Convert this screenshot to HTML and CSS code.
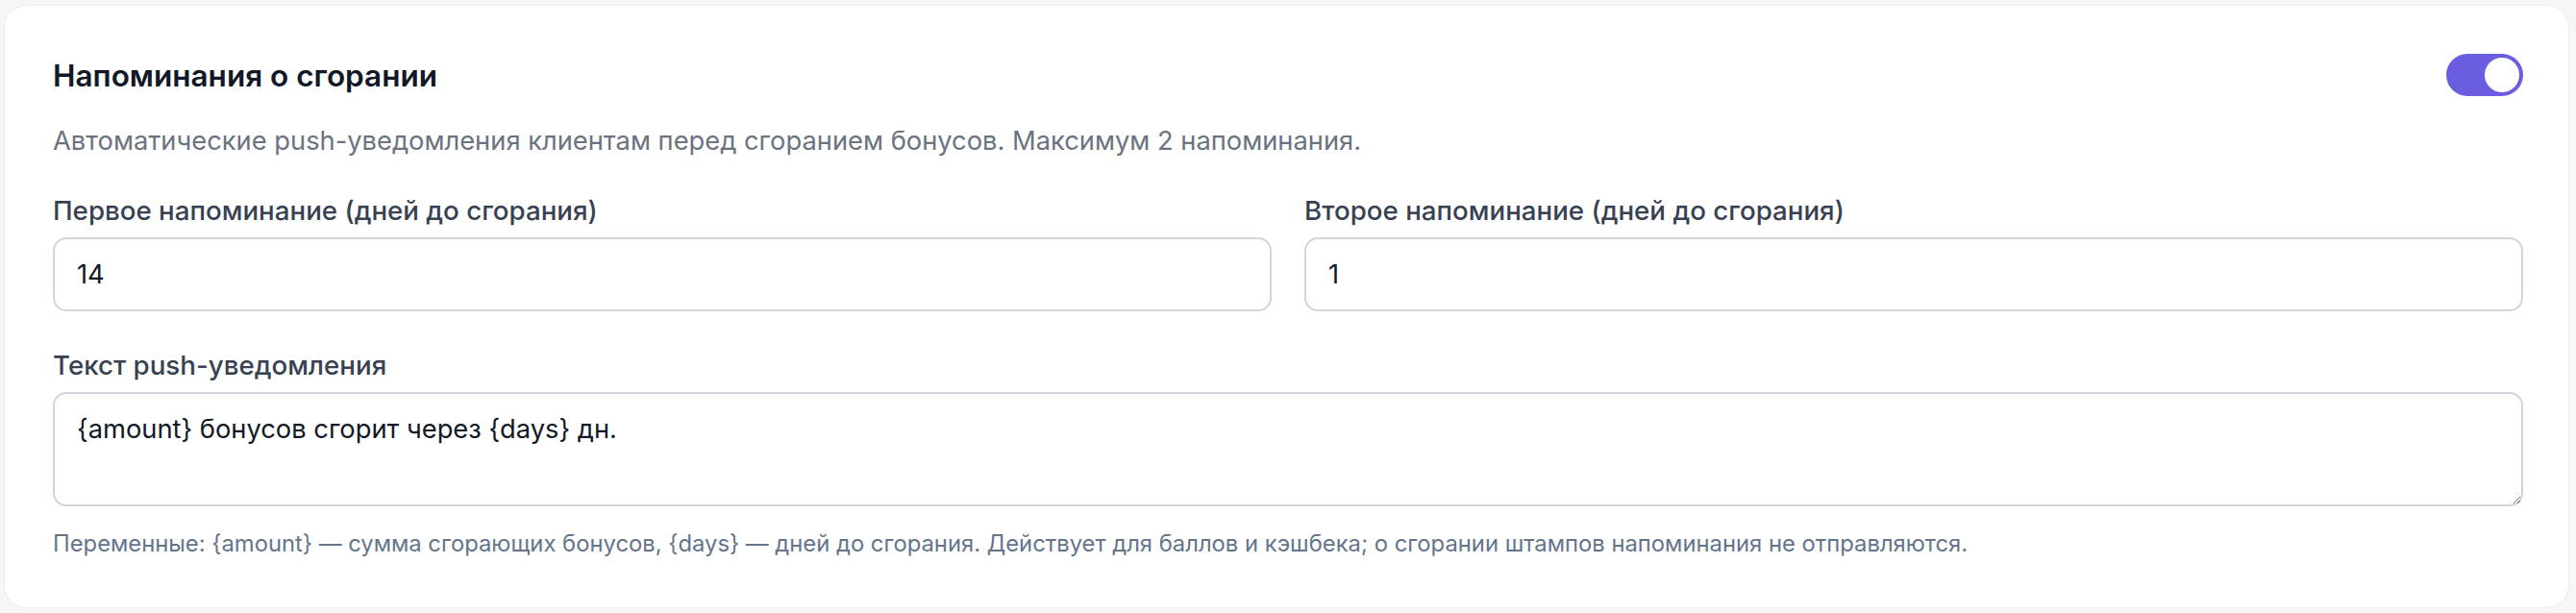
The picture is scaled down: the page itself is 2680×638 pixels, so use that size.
FILE: index.html
```html
<!DOCTYPE html>
<html lang="ru">
<head>
    <meta charset="UTF-8">
    <meta name="viewport" content="width=device-width, initial-scale=1.0">
    <title>Напоминания о сгорании</title>
    <link rel="stylesheet" href="styles.css">
</head>
<body>
    <div class="card">
        <div class="card_head">
            <h2 class="card_title">Напоминания о сгорании</h2>
            <label class="switch">
                <input type="checkbox" checked>
                <span class="switch_track"></span>
            </label>
        </div>
        <p class="card_desc">Автоматические push-уведомления клиентам перед сгоранием бонусов. Максимум 2 напоминания.</p>
        <div class="row">
            <div class="field">
                <label class="field_label" for="first">Первое напоминание (дней до сгорания)</label>
                <input type="number" class="textbox" id="first" value="14">
            </div>
            <div class="field">
                <label class="field_label" for="second">Второе напоминание (дней до сгорания)</label>
                <input type="number" class="textbox" id="second" value="1">
            </div>
        </div>
        <div class="field">
            <label class="field_label" for="push_text">Текст push-уведомления</label>
            <textarea class="textbox textarea" id="push_text">{amount} бонусов сгорит через {days} дн.</textarea>
        </div>
        <p class="hint">Переменные: {amount} — сумма сгорающих бонусов, {days} — дней до сгорания. Действует для баллов и кэшбека; о сгорании штампов напоминания не отправляются.</p>
    </div>
</body>
</html>
```

FILE: styles.css
```css
body
{
    margin: 0;
    background-color: #f5f6f8;
    font-family: Inter, "Noto Sans", sans-serif;
}
.card
{
    margin: 5px 7px 6px 4px;
    padding: 50px 47px 48px 50px;
    background-color: #ffffff;
    border: 1px solid #eceef2;
    border-radius: 24px;
}
.card_head
{
    display: flex;
    justify-content: space-between;
    align-items: center;
}
.card_title
{
    margin: 0;
    font-size: 31.5px;
    line-height: 46px;
    font-weight: 600;
    color: #111827;
}
.switch
{
    display: block;
    width: 80px;
    height: 44px;
    margin-top: -2px;
}
.switch input
{
    display: none;
}
.switch_track
{
    display: block;
    position: relative;
    width: 80px;
    height: 44px;
    border-radius: 22px;
    background-color: #6b5ddf;
}
.switch_track::after
{
    content: "";
    position: absolute;
    top: 4px;
    right: 4px;
    width: 36px;
    height: 36px;
    border-radius: 50%;
    background-color: #ffffff;
}
.card_desc
{
    margin: 24px 0 32px 0;
    font-size: 27.3px;
    line-height: 41px;
    color: #6b7280;
}
.row
{
    display: grid;
    grid-template-columns: 1fr 1fr;
    column-gap: 34px;
    margin-bottom: 36px;
}
.field
{
    display: flex;
    flex-direction: column;
}
.field_label
{
    margin-bottom: 7px;
    font-size: 27.7px;
    line-height: 41px;
    font-weight: 500;
    color: #374151;
}
.textbox
{
    box-sizing: border-box;
    height: 77px;
    padding: 0 23px;
    border: 2px solid #d1d5db;
    border-radius: 14px;
    font-family: Inter, "Noto Sans", sans-serif;
    font-size: 27.3px;
    color: #111827;
    background-color: #ffffff;
    outline: none;
    -moz-appearance: textfield;
}
.textbox::-webkit-outer-spin-button,
.textbox::-webkit-inner-spin-button
{
    -webkit-appearance: none;
    margin: 0;
}
.textarea
{
    height: 119px;
    padding: 20px 23px;
    line-height: 1.25;
}
.hint
{
    margin: 21px 0 0 0;
    font-size: 23.8px;
    line-height: 36px;
    color: #64748b;
}
```
